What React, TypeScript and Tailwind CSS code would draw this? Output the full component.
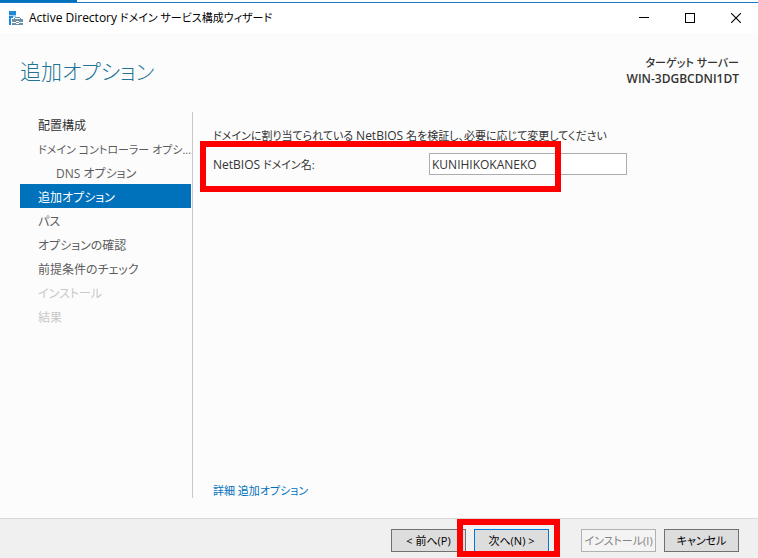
import React from 'react';

type StepState = 'done' | 'normal' | 'active' | 'disabled';

interface Step {
  label: string;
  state: StepState;
  nested?: boolean;
  long?: boolean;
}

const steps: Step[] = [
  { label: '配置構成', state: 'done' },
  { label: 'ドメイン コントローラー オプシ…', state: 'normal', long: true },
  { label: 'DNS オプション', state: 'normal', nested: true },
  { label: '追加オプション', state: 'active' },
  { label: 'パス', state: 'normal' },
  { label: 'オプションの確認', state: 'normal' },
  { label: '前提条件のチェック', state: 'normal' },
  { label: 'インストール', state: 'disabled' },
  { label: '結果', state: 'disabled' },
];

const stepColors: Record<StepState, string> = {
  done: 'text-[#333333]',
  normal: 'text-[#5c5c5c]',
  active: 'bg-[#0072bc] text-white',
  disabled: 'text-[#c8c8c8]',
};

const AppIcon: React.FC = () => (
  <svg className="h-4 w-4 shrink-0" viewBox="0 0 16 16" shapeRendering="crispEdges" aria-hidden="true">
    <path d="M1 1h7v4H1zM1 6h4v9H1z" fill="#1e88d8" />
    <path d="M5 6h3v1H5zM1 5h7v1H1z" fill="#a5d0f0" />
    <path d="M3 8h3V7h7v2h3v7H3z" fill="#fff" />
    <path d="M4 9h2V8h1V7h5v1h1v1h2v3h-4v-1H8v1H4z" fill="#6f8fa5" />
    <path d="M7 8h5v1H7z" fill="#fff" />
    <path d="M4 13h4v1h3v-1h4v2H4z" fill="#6f8fa5" />
    <path d="M8 12h3v1H8z" fill="#6f8fa5" />
  </svg>
);

const TitleBar: React.FC = () => (
  <header className="flex h-[30px] items-center bg-white pl-2 text-black">
    <AppIcon />
    <h1 className="ml-[5px] flex-1 text-[11px] whitespace-nowrap">
      <span className="text-[12px]">Active Directory</span> ドメイン サービス構成ウィザード
    </h1>
    <button type="button" aria-label="最小化" className="flex h-full w-[46px] items-center justify-center">
      <svg width="10" height="10" viewBox="0 0 10 10" shapeRendering="crispEdges">
        <path d="M0 4h10v1H0z" />
      </svg>
    </button>
    <button type="button" aria-label="最大化" className="flex h-full w-[46px] items-center justify-center">
      <svg width="10" height="10" viewBox="0 0 10 10" shapeRendering="crispEdges">
        <path d="M0 0h10v10H0zM1 1v8h8V1z" fillRule="evenodd" />
      </svg>
    </button>
    <button type="button" aria-label="閉じる" className="flex h-full w-[45px] items-center justify-center">
      <svg width="10" height="10" viewBox="0 0 10 10">
        <path d="M0 0l10 10M10 0L0 10" stroke="#000" strokeWidth="1.1" />
      </svg>
    </button>
  </header>
);

const StepList: React.FC = () => (
  <nav className="w-[173px] shrink-0 border-r border-[#c8c8c8] pr-px">
    <ol>
      {steps.map((step) => (
        <li
          key={step.label}
          aria-current={step.state === 'active' ? 'step' : undefined}
          className={`h-6 pt-0.5 leading-6 whitespace-nowrap ${step.long ? 'text-[11px]' : 'text-[12px]'} ${step.nested ? 'pl-9' : 'pl-[18px]'} ${stepColors[step.state]}`}
        >
          {step.label}
        </li>
      ))}
    </ol>
  </nav>
);

const buttonBase = 'h-[23px] w-[75px] border leading-5 whitespace-nowrap';

export default function App() {
  return (
    <div className="flex min-h-screen flex-col bg-[#fcfcfc] font-['Open_Sans','Noto_Sans_CJK_JP',sans-serif] text-[#333333] [font-feature-settings:'palt']">
      <div className="h-[3px] border-b border-[#1979ca] bg-white">
        <div className="h-0.5 w-[77px] bg-[#0072bc]" />
      </div>
      <TitleBar />

      <div className="flex items-start justify-between pt-[22px] pr-[19px] pl-5">
        <h2 className="text-[21px] leading-8 font-light text-[#1e7396]">追加オプション</h2>
        <p className="text-right text-[11px] leading-4 font-medium">
          ターゲット サーバー
          <br />
          <span className="text-[12px] font-semibold">WIN-3DGBCDNI1DT</span>
        </p>
      </div>

      <div className="mt-[25px] mb-5 flex flex-1 pl-5">
        <StepList />
        <main className="flex min-w-0 flex-1 flex-col pl-5 text-[11px]">
          <p className="mt-3.5 leading-5 whitespace-nowrap">
            ドメインに割り当てられている <span className="text-[12px]">NetBIOS</span> 名を検証し、必要に応じて変更してください
          </p>
          <div className="relative mt-[7px] flex items-center">
            <label htmlFor="netbios" className="w-[216px] pt-0.5">
              <span className="text-[12px]">NetBIOS</span> ドメイン名:
            </label>
            <input
              id="netbios"
              type="text"
              defaultValue="KUNIHIKOKANEKO"
              className="h-[22px] w-[198px] border border-[#abadb3] bg-white px-0.5 text-[12px] outline-none"
            />
            <div className="pointer-events-none absolute -top-3 -left-[13px] h-[51px] w-[361px] border-6 border-[#ff0000]" />
          </div>
          <a href="#" className="mt-auto self-start leading-[14px] text-[#0072bc]">
            詳細 追加オプション
          </a>
        </main>
      </div>

      <footer className="flex h-10 items-start justify-end border-t border-[#d9d9d9] bg-[#f0f0f0] pt-2.5 pr-[19px] text-[11px] text-black">
        <button type="button" className={`${buttonBase} mr-2 border-[#707070] bg-[#dddddd]`}>
          &lt; 前へ(P)
        </button>
        <div className="relative mr-8">
          <button type="button" className={`${buttonBase} block border-[#0078d7] bg-[#dddddd]`}>
            次へ(N) &gt;
          </button>
          <div className="pointer-events-none absolute -top-2.5 -left-[17px] h-[38px] w-[103px] border-6 border-[#ff0000]" />
        </div>
        <button type="button" disabled className={`${buttonBase} mr-2 border-[#adb2b5] bg-[#f4f4f4] text-[#838383]`}>
          インストール(I)
        </button>
        <button type="button" className={`${buttonBase} border-[#707070] bg-[#dddddd]`}>
          キャンセル
        </button>
      </footer>
    </div>
  );
}
